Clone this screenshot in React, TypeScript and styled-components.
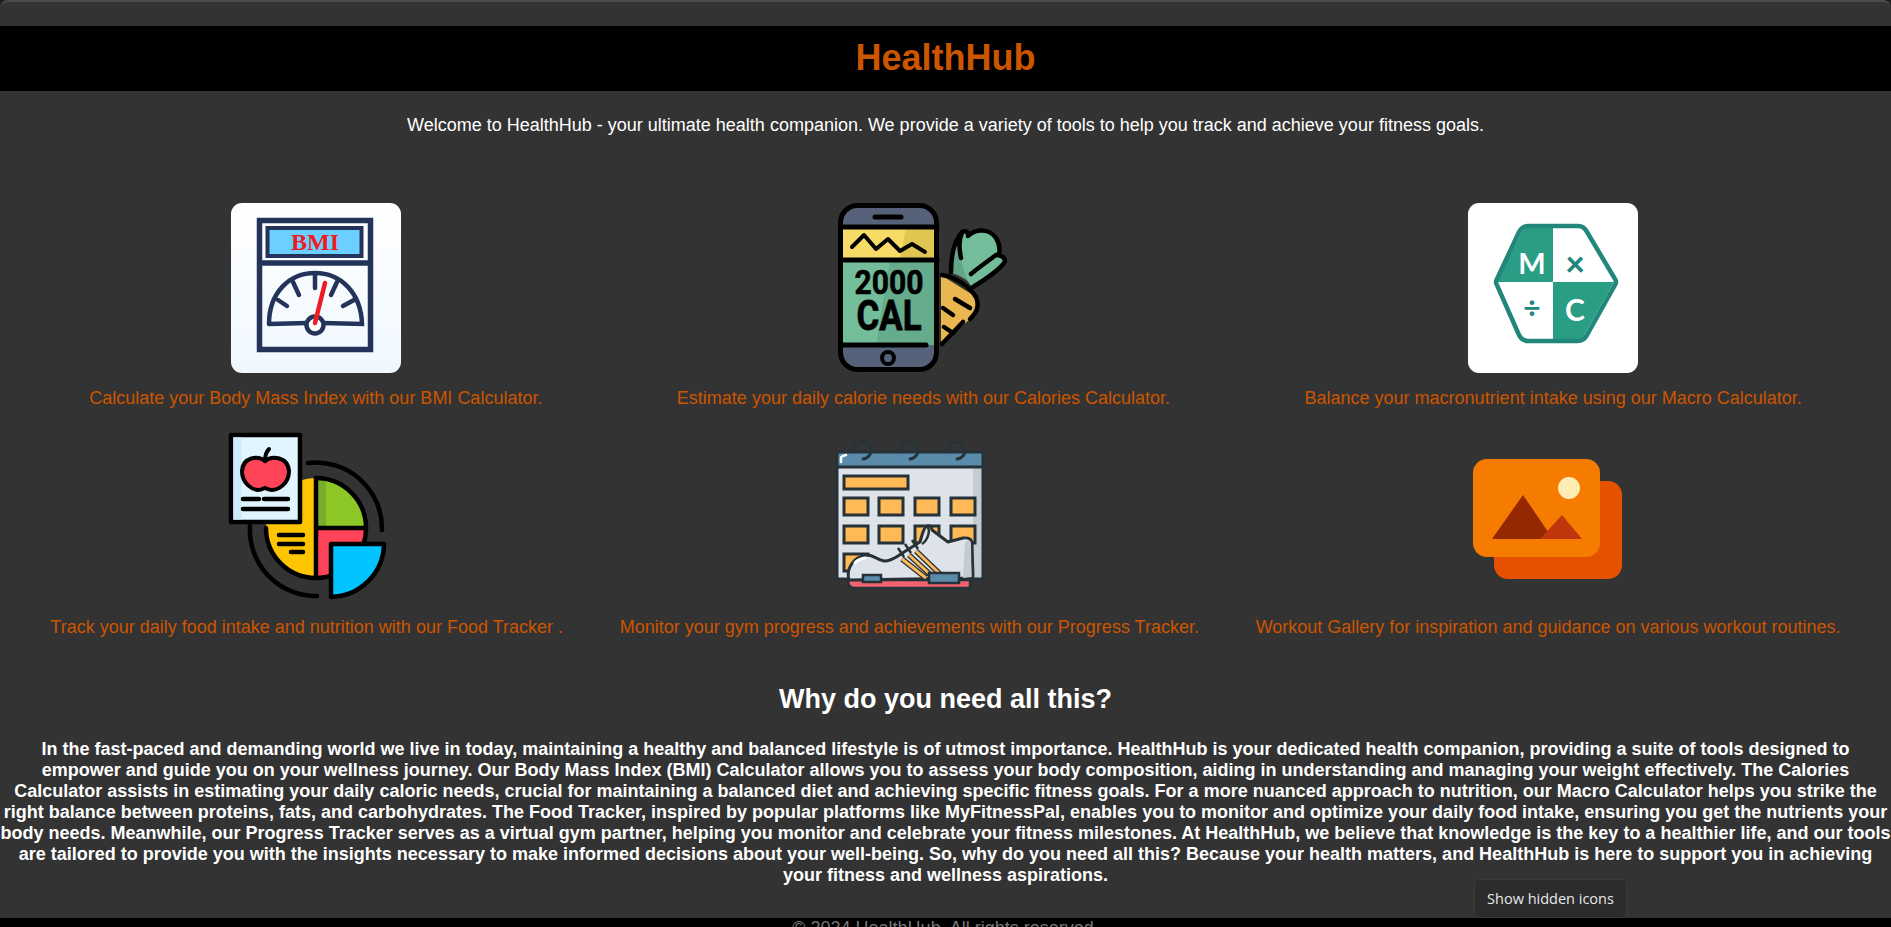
import styled, { createGlobalStyle } from "styled-components";

const GlobalStyle = createGlobalStyle`
  html, body {
    margin: 0;
    height: 927px;
    overflow: hidden;
    background: #1e1e1e;
  }
`;

const Page = styled.div`
  position: relative;
  height: 925px;
  overflow: hidden;
  border-top: 2px solid #4b4b50;
  border-radius: 8px 8px 0 0;
  background: #333333;
  color: #ffffff;
  font-family: "Liberation Sans", Arial, sans-serif;
  font-size: 18px;
  line-height: 21px;
`;

const Header = styled.header`
  margin-top: 24px;
  height: 65px;
  display: flex;
  align-items: center;
  justify-content: center;
  background: #000000;
`;

const Title = styled.h1`
  margin: 0 0 2px;
  font-size: 36px;
  line-height: 41px;
  font-weight: 700;
  color: #cc5500;
`;

const Intro = styled.p`
  margin: 0;
  padding-top: 24px;
  text-align: center;
`;

const Tools = styled.section`
  display: flex;
  flex-wrap: wrap;
  justify-content: space-around;
  padding: 67px 22px 0;
  row-gap: 23px;
`;

const Tool = styled.a`
  display: flex;
  flex-direction: column;
  align-items: center;
  gap: 15px;
  color: #cc5500;
`;

const IconBox = styled.svg`
  display: block;
  width: 170px;
  height: 170px;
`;

const SoftIconBox = styled(IconBox)`
  filter: blur(0.6px);
`;

const Heading = styled.h2`
  margin: 0;
  padding-top: 46px;
  text-align: center;
  font-size: 27px;
  line-height: 31px;
  font-weight: 700;
`;

const Story = styled.p`
  margin: 0;
  padding-top: 24px;
  text-align: center;
  font-weight: 700;
`;

const Footer = styled.footer`
  position: absolute;
  left: 0;
  right: 0;
  bottom: 0;
  height: 9px;
  background: #000000;
  color: #777777;
  text-align: center;
  overflow: hidden;
`;

const HiddenIconsTip = styled.div`
  position: absolute;
  left: 1474px;
  top: 877px;
  width: 153px;
  height: 39px;
  box-sizing: border-box;
  display: flex;
  align-items: center;
  justify-content: center;
  border: 1px solid #3a3a3a;
  border-radius: 5px;
  background: #2c2c2c;
  color: #e8e8e8;
  font-family: "Open Sans", "Noto Sans", sans-serif;
  font-size: 14.5px;
`;

const BmiIcon = () => (
  <IconBox viewBox="0 0 170 170">
    <defs>
      <linearGradient id="bmiBg" x1="0" y1="0" x2="0" y2="1">
        <stop offset="0" stopColor="#ffffff" />
        <stop offset="1" stopColor="#f0f8ff" />
      </linearGradient>
    </defs>
    <rect width="170" height="170" rx="11" fill="url(#bmiBg)" />
    <g fill="none" stroke="#23335a" strokeWidth="5.5">
      <rect x="28.5" y="17.5" width="111" height="129" />
      <line x1="28" y1="60" x2="140" y2="60" />
      <rect x="36.5" y="25" width="94" height="28" fill="#6bd0ff" strokeWidth="4" />
    </g>
    <text x="84" y="47" textAnchor="middle" fontFamily="Liberation Serif, serif" fontWeight="700" fontSize="24" fill="#ed1c24">
      BMI
    </text>
    <g fill="none" stroke="#23335a" strokeWidth="4.5" strokeLinecap="round">
      <path d="M38 121 C38 90 58 70 84 70 C110 70 130 90 131 121 L92 120 M76 120 L38 121" />
      <circle cx="84" cy="122" r="8.5" fill="#ffffff" />
      <path d="M84 71 V85 M62 79 L68 92 M106 79 L100 92 M47 97 L56 103 M123 97 L112 103" />
    </g>
    <line x1="84" y1="120" x2="94" y2="80" stroke="#ed1c24" strokeWidth="4.5" strokeLinecap="round" />
  </IconBox>
);

const CaloriesIcon = () => (
  <IconBox viewBox="0 0 170 170">
    <path d="M103 72 L138 94 L140 103 L131 117 L103 140 Z" fill="#e9b64f" />
    <path d="M112 69 C113 50 116 38 124 29 C128 27 130 30 130 33 C138 25 150 26 157 33 C161 38 162 45 162 52 L167 57 C167 62 150 75 134 84 L128 76 L120 72 Z" fill="#74bd9a" />
    <path d="M112 69 C113 50 116 38 124 29 C121 40 121 60 130 78 L120 72 Z" fill="#63a588" />
    <g fill="none" stroke="#000000" strokeWidth="4.5" strokeLinecap="round" strokeLinejoin="round">
      <path d="M104 72 C118 74 132 84 138 94 C142 104 138 110 132 116 M125 119 L104 141" />
      <path d="M113 69 C113 52 116 38 124 29 C128 27 131 30 130 33 C138 25 152 26 158 35 C162 41 162 47 161 52 M158 52 C162 52 167 54 167 58 C165 64 148 76 135 84 M133 71 C140 65 150 58 158 52 M124 30 C120 38 121 46 123 55" />
      <path d="M117 96 L132 105 M105 105 L115 112 M106 124 L115 130" />
    </g>
    <rect x="2.5" y="2.5" width="96" height="164" rx="17" fill="#55627a" />
    <rect x="2.5" y="24" width="96" height="33" fill="#f6dc66" />
    <rect x="2.5" y="57" width="96" height="85" fill="#74bd9a" />
    <path d="M98 57 V142 H38 L52 57 Z" fill="#63a588" opacity="0.75" />
    <path d="M98 24 V57 H62 L68 24 Z" fill="#e0c550" />
    <g fill="none" stroke="#000000" strokeWidth="5" strokeLinecap="round" strokeLinejoin="round">
      <rect x="2.5" y="2.5" width="96" height="164" rx="17" />
      <path d="M2 24 H99 M2 57 H99 M2 142 H88" />
      <path d="M37 14 H63" />
      <path d="M14 44 L26 32 L38 46 L50 36 L62 48 L74 41 L87 49" strokeWidth="4" />
      <circle cx="50" cy="155" r="6" strokeWidth="4" />
    </g>
    <text x="51" y="91" textAnchor="middle" textLength="69" lengthAdjust="spacingAndGlyphs" fontFamily="Roboto, sans-serif" fontWeight="700" fontSize="33" stroke="#000000" strokeWidth="0.6">
      2000
    </text>
    <text x="51" y="127" textAnchor="middle" textLength="65" lengthAdjust="spacingAndGlyphs" fontFamily="Roboto, sans-serif" fontWeight="700" fontSize="42" stroke="#000000" strokeWidth="0.8">
      CAL
    </text>
  </IconBox>
);

const MacroIcon = () => (
  <IconBox viewBox="0 0 170 170">
    <rect width="170" height="170" rx="11" fill="#ffffff" />
    <path d="M85 24 H62 Q56 24 53 30 L29 79 H85 Z M85 79 V137 H108 Q114 137 117 131 L146 79 Z" fill="#2a9d85" />
    <path d="M60 23 H110 Q116 23 119 29 L147 76 Q149 79 147 82 L119 132 Q116 138 110 138 H60 Q54 138 51 132 L29 82 Q27 79 29 76 L51 29 Q54 23 60 23 Z" fill="none" stroke="#21877a" strokeWidth="4.5" />
    <text x="64" y="71" textAnchor="middle" fontFamily="Lato, sans-serif" fontWeight="700" fontSize="29" fill="#ffffff">
      M
    </text>
    <text x="107" y="73" textAnchor="middle" fontFamily="Lato, sans-serif" fontWeight="900" fontSize="34" fill="#21877a">
      ×
    </text>
    <text x="64" y="116" textAnchor="middle" fontFamily="Lato, sans-serif" fontWeight="700" fontSize="30" fill="#21877a">
      ÷
    </text>
    <text x="107" y="118" textAnchor="middle" fontFamily="Lato, sans-serif" fontWeight="700" fontSize="30" fill="#ffffff">
      C
    </text>
  </IconBox>
);

const FoodIcon = () => (
  <IconBox viewBox="0 2 170 170">
    <path d="M94 48 A50 50 0 0 0 94 148 Z" fill="#fdc500" />
    <path d="M94 48 A50 50 0 0 1 144 98 H94 Z" fill="#8cc725" />
    <path d="M94 48 H104 V98 H94 Z" fill="#79ad2b" />
    <path d="M94 98 H144 A50 50 0 0 1 94 148 Z" fill="#ff4459" />
    <g fill="none" stroke="#000000" strokeWidth="4.5" strokeLinecap="round" strokeLinejoin="round">
      <path d="M94 48 A50 50 0 0 1 144 98 A50 50 0 0 1 94 148 A50 50 0 0 1 44 98" />
      <path d="M94 48 V148 M94 98 H144" />
      <path d="M86 33 A66 66 0 0 1 160 100 M28 96 A66 66 0 0 0 95 166" />
      <path d="M57 105 H81 M57 114 H81 M69 122 H81" />
    </g>
    <path d="M109 114 H162 A54 54 0 0 1 109 167 Z" fill="#00c3ff" stroke="#000000" strokeWidth="4.5" strokeLinejoin="round" />
    <rect x="9" y="5" width="69" height="87" fill="#e1f5ff" stroke="#000000" strokeWidth="4.5" strokeLinejoin="round" />
    <rect x="11.5" y="7.5" width="8" height="82" fill="#cdeafa" />
    <path d="M43 31 C36 25 21 27 20 41 C20 54 31 60 36 60 C40 60 42 58 43 58 C44 58 46 60 50 60 C56 60 67 54 67 41 C66 27 50 25 43 31 Z" fill="#ff4459" stroke="#000000" strokeWidth="4" />
    <path d="M43 31 C43 26 44 22 47 19" fill="none" stroke="#000000" strokeWidth="4" strokeLinecap="round" />
    <path d="M21 69 H37 M42 69 H66 M21 79 H66" fill="none" stroke="#000000" strokeWidth="4.5" strokeLinecap="round" />
  </IconBox>
);

const ProgressIcon = () => (
  <IconBox viewBox="0 2 170 170">
    <rect x="13" y="22" width="146" height="127" fill="#dde3e8" />
    <rect x="149" y="37" width="10" height="112" fill="#c5cbcf" />
    <rect x="13" y="22" width="146" height="15" fill="#5a8bab" />
    <rect x="13" y="22" width="146" height="127" fill="none" stroke="#263238" strokeWidth="3" />
    <line x1="13" y1="37" x2="159" y2="37" stroke="#263238" strokeWidth="3" />
    <g fill="none" stroke="#263238" strokeWidth="3" strokeLinecap="round">
      <path d="M30 20 A8.5 8.5 0 1 1 39 29" />
      <path d="M77 20 A8.5 8.5 0 1 1 86 29" />
      <path d="M124 20 A8.5 8.5 0 1 1 133 29" />
    </g>
    <path d="M17 32 V28 Q17 26 22 25" fill="none" stroke="#ffffff" strokeWidth="2.5" strokeLinecap="round" />
    <g fill="#ffb957" stroke="#263238" strokeWidth="3">
      <rect x="20" y="46" width="64" height="13" />
      <rect x="20" y="68" width="24" height="17" />
      <rect x="55" y="68" width="24" height="17" />
      <rect x="91" y="68" width="24" height="17" />
      <rect x="127" y="68" width="24" height="17" />
      <rect x="20" y="96" width="24" height="17" />
      <rect x="55" y="96" width="24" height="17" />
      <rect x="91" y="96" width="24" height="17" />
      <rect x="127" y="96" width="24" height="17" />
      <rect x="20" y="124" width="24" height="17" />
    </g>
    <path d="M24 150 H146 V158 H30 Q24 158 24 150 Z" fill="#f3626f" stroke="#263238" strokeWidth="2.5" />
    <path d="M25 150 C22 140 28 127 43 125 C50 125 53 130 60 131 C68 131 74 126 80 122 L96 112 C98 106 99 98 103 96 C106 95 108 97 108 100 L124 112 L139 108 Q148 107 148 114 L149 148 Z" fill="#dde3e8" stroke="#263238" strokeWidth="3" strokeLinejoin="round" />
    <path d="M139 148 L141 112 Q147 108 147 114 L147.5 147 Z" fill="#c5cbcf" />
    <g stroke="#263238" strokeWidth="5.5">
      <path d="M78 129 L102 148 M85 125 L109 147 M92 121 L116 144" />
    </g>
    <g stroke="#ffb957" strokeWidth="3">
      <path d="M78 129 L102 148 M85 125 L109 147 M92 121 L116 144" />
    </g>
    <path d="M74 118 L80 127 M81 114 L87 123 M88 110 L94 119" stroke="#263238" strokeWidth="2.5" />
    <path d="M103 96 C107 100 104 110 98 114" fill="none" stroke="#263238" strokeWidth="2.5" />
    <path d="M31 133 Q34 129 41 128" fill="none" stroke="#ffffff" strokeWidth="3" strokeLinecap="round" />
    <rect x="39" y="145" width="18" height="7" fill="#5a8bab" stroke="#263238" strokeWidth="2.5" />
    <rect x="105" y="143" width="30" height="10" fill="#5a8bab" stroke="#263238" strokeWidth="2.5" />
  </IconBox>
);

const GalleryIcon = () => (
  <SoftIconBox viewBox="0 2 170 170">
    <rect x="31" y="51" width="128" height="98" rx="14" fill="#e65100" />
    <rect x="10" y="29" width="127" height="98" rx="14" fill="#f57c00" />
    <circle cx="106" cy="58" r="11" fill="#ffecb3" />
    <path d="M29 109 L60 65 L90 109 Z" fill="#942800" />
    <path d="M77 109 L99 85 L119 109 Z" fill="#bf360c" />
  </SoftIconBox>
);

const tools = [
  { icon: <BmiIcon />, text: "Calculate your Body Mass Index with our BMI Calculator." },
  { icon: <CaloriesIcon />, text: "Estimate your daily calorie needs with our Calories Calculator." },
  { icon: <MacroIcon />, text: "Balance your macronutrient intake using our Macro Calculator." },
  { icon: <FoodIcon />, text: "Track your daily food intake and nutrition with our Food Tracker ." },
  { icon: <ProgressIcon />, text: "Monitor your gym progress and achievements with our Progress Tracker." },
  { icon: <GalleryIcon />, text: "Workout Gallery for inspiration and guidance on various workout routines." },
];

export default function App() {
  return (
    <>
      <GlobalStyle />
      <Page>
        <Header>
          <Title>HealthHub</Title>
        </Header>
        <Intro>
          Welcome to HealthHub - your ultimate health companion. We provide a variety of tools to help you track and achieve your fitness goals.
        </Intro>
        <Tools>
          {tools.map((tool) => (
            <Tool key={tool.text}>
              {tool.icon}
              <span>{tool.text}</span>
            </Tool>
          ))}
        </Tools>
        <Heading>Why do you need all this?</Heading>
        <Story>
          In the fast-paced and demanding world we live in today, maintaining a healthy and balanced lifestyle is of utmost importance. HealthHub is your dedicated health companion, providing a suite of tools designed to empower and guide you on your wellness journey. Our Body Mass Index (BMI) Calculator allows you to assess your body composition, aiding in understanding and managing your weight effectively. The Calories Calculator assists in estimating your daily caloric needs, crucial for maintaining a balanced diet and achieving specific fitness goals. For a more nuanced approach to nutrition, our Macro Calculator helps you strike the right balance between proteins, fats, and carbohydrates. The Food Tracker, inspired by popular platforms like MyFitnessPal, enables you to monitor and optimize your daily food intake, ensuring you get the nutrients your body needs. Meanwhile, our Progress Tracker serves as a virtual gym partner, helping you monitor and celebrate your fitness milestones. At HealthHub, we believe that knowledge is the key to a healthier life, and our tools are tailored to provide you with the insights necessary to make informed decisions about your well-being. So, why do you need all this? Because your health matters, and HealthHub is here to support you in achieving your fitness and wellness aspirations.
        </Story>
        <Footer>© 2024 HealthHub. All rights reserved.</Footer>
        <HiddenIconsTip>Show hidden icons</HiddenIconsTip>
      </Page>
    </>
  );
}
